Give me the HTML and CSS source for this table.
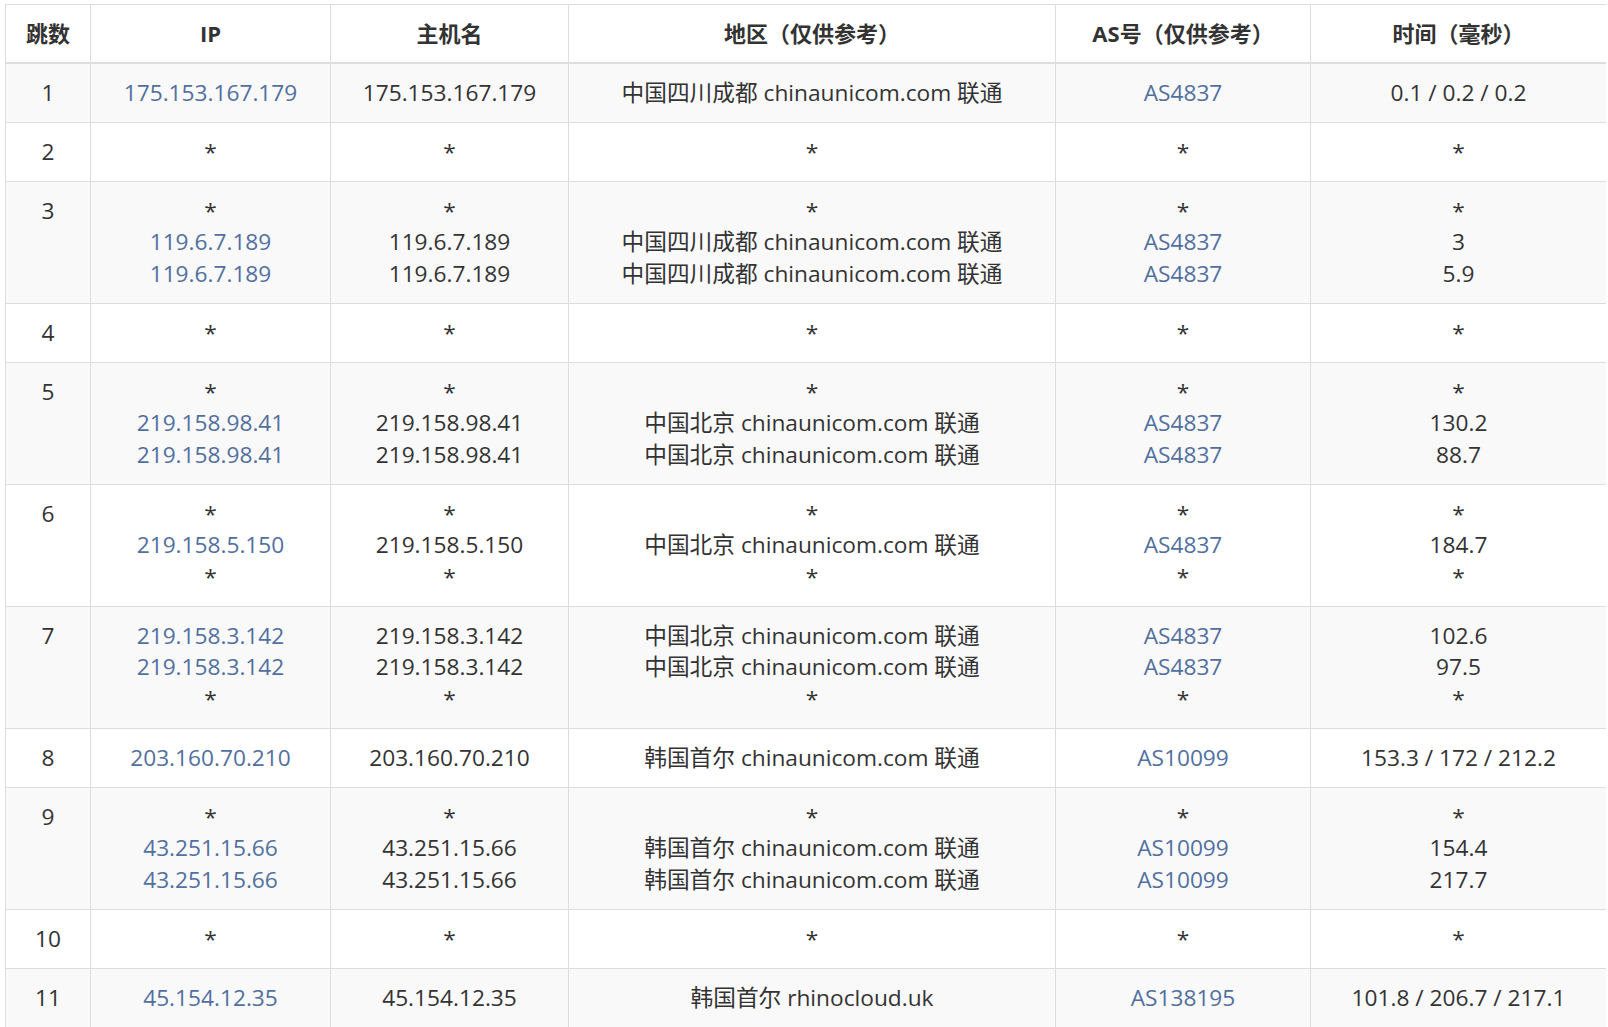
FILE: index.html
```html
<!DOCTYPE html>
<html lang="zh-CN">
<head>
<meta charset="utf-8">
<title>Traceroute</title>
<link rel="stylesheet" href="styles.css">
</head>
<body>
<table class="trace">
  <colgroup>
    <col class="c-hop"><col class="c-ip"><col class="c-host"><col class="c-geo"><col class="c-as"><col class="c-time">
  </colgroup>
  <thead>
    <tr><th>跳数</th><th>IP</th><th>主机名</th><th>地区（仅供参考）</th><th>AS号（仅供参考）</th><th>时间（毫秒）</th></tr>
  </thead>
  <tbody>
    <tr>
      <td>1</td>
      <td><a class="lk">175.153.167.179</a></td>
      <td>175.153.167.179</td>
      <td>中国四川成都 chinaunicom.com 联通</td>
      <td><a class="lk">AS4837</a></td>
      <td>0.1 / 0.2 / 0.2</td>
    </tr>
    <tr>
      <td>2</td><td>*</td><td>*</td><td>*</td><td>*</td><td>*</td>
    </tr>
    <tr>
      <td>3</td>
      <td>*<br><a class="lk">119.6.7.189</a><br><a class="lk">119.6.7.189</a></td>
      <td>*<br>119.6.7.189<br>119.6.7.189</td>
      <td>*<br>中国四川成都 chinaunicom.com 联通<br>中国四川成都 chinaunicom.com 联通</td>
      <td>*<br><a class="lk">AS4837</a><br><a class="lk">AS4837</a></td>
      <td>*<br>3<br>5.9</td>
    </tr>
    <tr>
      <td>4</td><td>*</td><td>*</td><td>*</td><td>*</td><td>*</td>
    </tr>
    <tr>
      <td>5</td>
      <td>*<br><a class="lk">219.158.98.41</a><br><a class="lk">219.158.98.41</a></td>
      <td>*<br>219.158.98.41<br>219.158.98.41</td>
      <td>*<br>中国北京 chinaunicom.com 联通<br>中国北京 chinaunicom.com 联通</td>
      <td>*<br><a class="lk">AS4837</a><br><a class="lk">AS4837</a></td>
      <td>*<br>130.2<br>88.7</td>
    </tr>
    <tr>
      <td>6</td>
      <td>*<br><a class="lk">219.158.5.150</a><br>*</td>
      <td>*<br>219.158.5.150<br>*</td>
      <td>*<br>中国北京 chinaunicom.com 联通<br>*</td>
      <td>*<br><a class="lk">AS4837</a><br>*</td>
      <td>*<br>184.7<br>*</td>
    </tr>
    <tr>
      <td>7</td>
      <td><a class="lk">219.158.3.142</a><br><a class="lk">219.158.3.142</a><br>*</td>
      <td>219.158.3.142<br>219.158.3.142<br>*</td>
      <td>中国北京 chinaunicom.com 联通<br>中国北京 chinaunicom.com 联通<br>*</td>
      <td><a class="lk">AS4837</a><br><a class="lk">AS4837</a><br>*</td>
      <td>102.6<br>97.5<br>*</td>
    </tr>
    <tr>
      <td>8</td>
      <td><a class="lk">203.160.70.210</a></td>
      <td>203.160.70.210</td>
      <td>韩国首尔 chinaunicom.com 联通</td>
      <td><a class="lk">AS10099</a></td>
      <td>153.3 / 172 / 212.2</td>
    </tr>
    <tr>
      <td>9</td>
      <td>*<br><a class="lk">43.251.15.66</a><br><a class="lk">43.251.15.66</a></td>
      <td>*<br>43.251.15.66<br>43.251.15.66</td>
      <td>*<br>韩国首尔 chinaunicom.com 联通<br>韩国首尔 chinaunicom.com 联通</td>
      <td>*<br><a class="lk">AS10099</a><br><a class="lk">AS10099</a></td>
      <td>*<br>154.4<br>217.7</td>
    </tr>
    <tr>
      <td>10</td><td>*</td><td>*</td><td>*</td><td>*</td><td>*</td>
    </tr>
    <tr>
      <td>11</td>
      <td><a class="lk">45.154.12.35</a></td>
      <td>45.154.12.35</td>
      <td>韩国首尔 rhinocloud.uk</td>
      <td><a class="lk">AS138195</a></td>
      <td>101.8 / 206.7 / 217.1</td>
    </tr>
  </tbody>
</table>
</body>
</html>
```

FILE: styles.css
```css
html, body {
  background: #ffffff;
}
body {
  margin: 4px 2px 0 5px;
  font-family: "Open Sans", "Noto Sans CJK SC", sans-serif;
  font-size: 22.7px;
  color: #333333;
}
.trace {
  width: 1601px;
  border-collapse: collapse;
  table-layout: fixed;
}
.c-hop { width: 85px; }
.c-ip { width: 240px; }
.c-host { width: 238px; }
.c-geo { width: 487px; }
.c-as { width: 255px; }
.c-time { width: 296px; }
.trace th,
.trace td {
  border: 1px solid #dddddd;
  padding: 13.25px 8px;
  line-height: 31.5px;
  text-align: center;
  vertical-align: top;
  white-space: nowrap;
}
.trace th {
  font-size: 22px;
  font-weight: 700;
  color: #333333;
  border-bottom: 2px solid #dddddd;
  padding: 12px 8px 12.5px;
  line-height: 32px;
}
.trace tbody tr:nth-child(odd) td {
  background: #f9f9f9;
}
.lk {
  color: #52709f;
  text-decoration: none;
}
```
